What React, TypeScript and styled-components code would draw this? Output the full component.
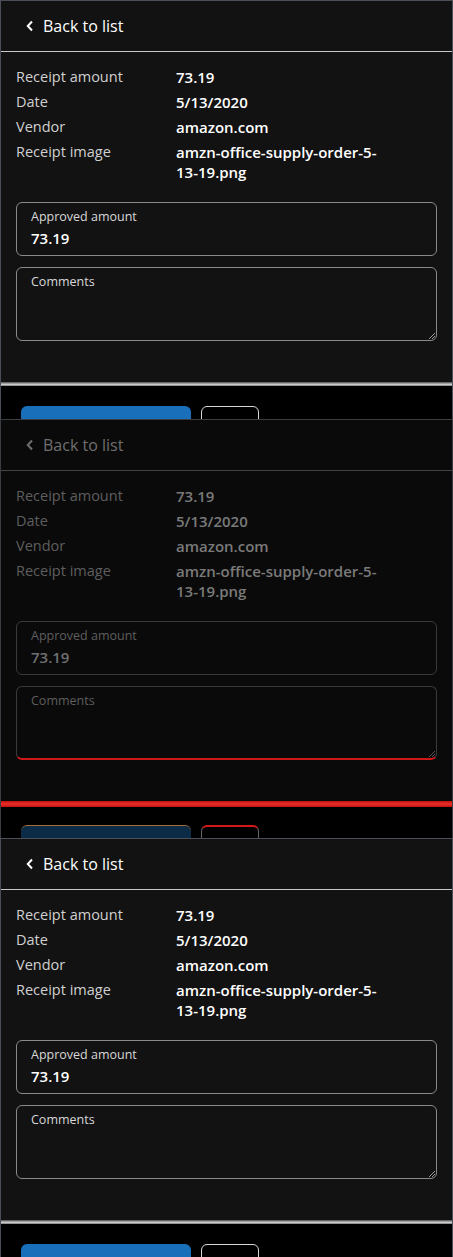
import React from "react"
import styled, { createGlobalStyle, css } from "styled-components"

const GlobalStyle = createGlobalStyle`
    html, body {
        margin: 0;
        padding: 0;
        background: #000;
    }
    body {
        font-family: "Open Sans", "Noto Sans", sans-serif;
    }
`

type Dim = { $dimmed?: boolean }

const Frame = styled.div<Dim>`
    height: 419px;
    overflow: hidden;
    background: #000;
    border-left: 1px solid ${p => (p.$dimmed ? "#3a3d42" : "#4a4f57")};
    border-right: 1px solid ${p => (p.$dimmed ? "#3a3d42" : "#4a4f57")};
    box-sizing: border-box;
`

const Panel = styled.div<Dim>`
    height: 386px;
    box-sizing: border-box;
    background: ${p => (p.$dimmed ? "#0a0a0a" : "#121212")};
    border-top: 1px solid ${p => (p.$dimmed ? "#3a3d42" : "#4a4f57")};
    display: flex;
    flex-direction: column;
    position: relative;
    &::after {
        content: "";
        position: absolute;
        left: 0;
        right: 0;
        bottom: 0;
        height: 4px;
        ${p =>
            p.$dimmed
                ? css`
                      height: 6px;
                      bottom: -2px;
                      background: linear-gradient(#c41010, #e8302a 50%, #c41010);
                  `
                : css`
                      background: linear-gradient(#4a4a4a, #d0d0d0 60%, #777);
                  `}
    }
`

const Header = styled.div<Dim>`
    height: 50px;
    display: flex;
    align-items: center;
    gap: 9px;
    padding-left: 25px;
    border-bottom: 1px solid ${p => (p.$dimmed ? "#444" : "#c8c8c8")};
    color: ${p => (p.$dimmed ? "#6f6f6f" : "#fff")};
    font-size: 16px;
`

const Chevron = styled.svg`
    width: 8px;
    height: 12px;
    flex: none;
`

const Body = styled.div`
    padding: 15px 15px 0;
    display: flex;
    flex-direction: column;
`

const Details = styled.dl`
    margin: 0;
    display: grid;
    grid-template-columns: 160px 1fr;
    row-gap: 5px;
`

const Label = styled.dt<Dim>`
    margin: 0;
    font-size: 14.5px;
    line-height: 20px;
    color: ${p => (p.$dimmed ? "#5e5e5e" : "#d0d0d0")};
`

const Value = styled.dd<Dim>`
    margin: 0;
    font-size: 15px;
    font-weight: 600;
    line-height: 20px;
    max-width: 216px;
    color: ${p => (p.$dimmed ? "#7a7a7a" : "#fff")};
`

const Field = styled.div<Dim & { $tall?: boolean; $flagged?: boolean }>`
    box-sizing: border-box;
    height: ${p => (p.$tall ? "74px" : "54px")};
    border: 1px solid ${p => (p.$dimmed ? "#3a3a3a" : "#8a8a8a")};
    border-radius: 6px;
    padding: 5px 14px 0;
    display: flex;
    flex-direction: column;
    position: relative;
    ${p =>
        p.$flagged &&
        css`
            border-bottom: 2px solid #d01818;
        `}
`

const FieldLabel = styled.span<Dim>`
    font-size: 12.5px;
    line-height: 18px;
    color: ${p => (p.$dimmed ? "#5e5e5e" : "#d8d8d8")};
`

const FieldValue = styled.span<Dim>`
    font-size: 15px;
    font-weight: 600;
    line-height: 24px;
    color: ${p => (p.$dimmed ? "#707070" : "#fff")};
`

const Grip = styled.svg`
    position: absolute;
    right: 1px;
    bottom: 1px;
    width: 7px;
    height: 7px;
`

const Fields = styled.div`
    margin-top: 20px;
    display: flex;
    flex-direction: column;
    gap: 11px;
`

const Footer = styled.div`
    display: flex;
    gap: 10px;
    padding: 20px 0 0 20px;
`

const PrimaryButton = styled.button<Dim>`
    width: 170px;
    height: 40px;
    border: none;
    border-radius: 6px;
    background: ${p => (p.$dimmed ? "#0b2b47" : "#1a6fba")};
    ${p =>
        p.$dimmed &&
        css`
            border-top: 1px solid #a0703a;
        `}
`

const SecondaryButton = styled.button<Dim>`
    width: 58px;
    height: 40px;
    border: 1px solid ${p => (p.$dimmed ? "#666" : "#d8d8d8")};
    border-radius: 6px;
    background: transparent;
    ${p =>
        p.$dimmed &&
        css`
            border-top: 2px solid #d01818;
        `}
`

const rows: [string, string][] = [
    ["Receipt amount", "73.19"],
    ["Date", "5/13/2020"],
    ["Vendor", "amazon.com"],
    ["Receipt image", "amzn-office-supply-order-5-13-19.png"],
]

const ReceiptFrame: React.FC<{ dimmed?: boolean }> = ({ dimmed }) => {
    const stroke = dimmed ? "#6f6f6f" : "#fff"
    return (
        <Frame $dimmed={dimmed}>
            <Panel $dimmed={dimmed}>
                <Header $dimmed={dimmed}>
                    <Chevron viewBox="0 0 8 12">
                        <polyline points="6,1.5 1.8,6 6,10.5" fill="none" stroke={stroke} strokeWidth="2" />
                    </Chevron>
                    Back to list
                </Header>
                <Body>
                    <Details>
                        {rows.map(([label, value]) => (
                            <React.Fragment key={label}>
                                <Label $dimmed={dimmed}>{label}</Label>
                                <Value $dimmed={dimmed}>{value}</Value>
                            </React.Fragment>
                        ))}
                    </Details>
                    <Fields>
                        <Field $dimmed={dimmed}>
                            <FieldLabel $dimmed={dimmed}>Approved amount</FieldLabel>
                            <FieldValue $dimmed={dimmed}>73.19</FieldValue>
                        </Field>
                        <Field $dimmed={dimmed} $tall $flagged={dimmed}>
                            <FieldLabel $dimmed={dimmed}>Comments</FieldLabel>
                            <Grip viewBox="0 0 7 7">
                                <line x1="1" y1="7" x2="7" y2="1" stroke={dimmed ? "#555" : "#9a9a9a"} strokeWidth="1" />
                                <line x1="4" y1="7" x2="7" y2="4" stroke={dimmed ? "#555" : "#9a9a9a"} strokeWidth="1" />
                            </Grip>
                        </Field>
                    </Fields>
                </Body>
            </Panel>
            <Footer>
                <PrimaryButton $dimmed={dimmed} />
                <SecondaryButton $dimmed={dimmed} />
            </Footer>
        </Frame>
    )
}

const App: React.FC = () => {
    return (
        <>
            <GlobalStyle />
            <ReceiptFrame />
            <ReceiptFrame dimmed />
            <ReceiptFrame />
        </>
    )
}

export default App
